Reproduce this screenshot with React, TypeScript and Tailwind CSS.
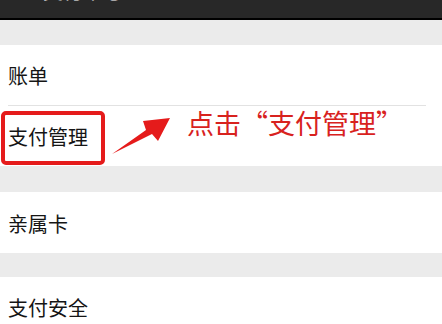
const red = "#e51b1b";

const Row = ({ label, className = "" }: { label: string; className?: string }) => (
  <div className={`flex items-center bg-white pl-2 text-[20px] text-[#151515] ${className}`}>
    <span className="pt-[2px]">{label}</span>
  </div>
);

const App = () => {
  return (
    <div
      className="flex h-[324px] w-[442px] flex-col overflow-hidden bg-[#ebebeb]"
      style={{ fontFamily: '"Noto Sans CJK SC", "Noto Sans", sans-serif' }}
    >
      {/* title bar, mostly scrolled off the top */}
      <div className="h-[20px] shrink-0 overflow-hidden border-b-2 border-black bg-[#282828]">
        <div className="-mt-[21px] flex items-center gap-5 pl-3 text-[20px] leading-[24px] text-white">
          <span>&lt;</span>
          <span>支付中心</span>
        </div>
      </div>

      <div className="h-[25px] shrink-0" />

      <Row label="账单" className="h-[60px] shrink-0" />
      <div className="flex h-px shrink-0 bg-white">
        <div className="ml-2 mr-4 flex-1 bg-[#e2e2e2]" />
      </div>

      <div className="relative flex h-[60px] shrink-0 items-center bg-white pl-2 text-[20px] text-[#151515]">
        <span className="pt-[2px]">支付管理</span>
        <div
          className="absolute left-[1px] top-[5px] h-[54px] w-[104px] rounded-[5px] border-4"
          style={{ borderColor: red }}
        />
        <svg className="absolute left-[110px] top-[4px]" width="64" height="44" viewBox="0 0 64 44">
          <polygon points="2,44 36,20 33,11 60,8 48,31 42,24" fill={red} />
        </svg>
        <span
          className="absolute left-[187px] top-[0px] text-[27px] leading-[34px]"
          style={{ color: "#d8221e" }}
        >
          点击“支付管理”
        </span>
      </div>

      <div className="h-[26px] shrink-0" />

      <Row label="亲属卡" className="h-[61px] shrink-0" />

      <div className="h-[24px] shrink-0" />

      <Row label="支付安全" className="h-[60px] shrink-0" />
    </div>
  );
};

export default App;
